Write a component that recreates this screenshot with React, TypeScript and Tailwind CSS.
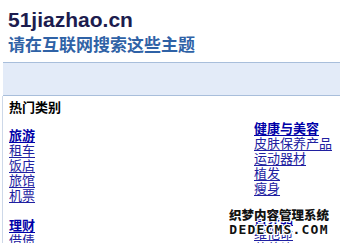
const cjk = "font-['SimSun','Noto_Sans_CJK_SC',sans-serif]"

const left = [
  { title: "旅游", items: ["租车", "饭店", "旅馆", "机票"] },
  { title: "理财", items: ["借债", "信用卡"] },
]

const right = [
  { title: "健康与美容", items: ["皮肤保养产品", "运动器材", "植发", "瘦身"] },
  { title: "营养品", items: ["维他命", "营养补品"] },
]

function Group({ title, items }: { title: string; items: string[] }) {
  return (
    <div className="flex flex-col items-start mb-[15px]">
      <a href="#" className="font-bold text-[#0000a8] underline underline-offset-2">
        {title}
      </a>
      {items.map((item) => (
        <a key={item} href="#" className="text-[#2020a0] underline underline-offset-2">
          {item}
        </a>
      ))}
    </div>
  )
}

export default function App() {
  return (
    <div className="relative w-[340px] h-[243px] overflow-hidden bg-white">
      <div className="pl-[8px] pt-[8px]">
        <h1 className="font-['Liberation_Sans',Arial,sans-serif] text-[21px] leading-[24px] font-bold text-[#1c1c4e]">
          51jiazhao.cn
        </h1>
        <p className={`${cjk} mt-[2px] text-[17px] leading-[20px] font-bold text-[#2f62a6]`}>
          请在互联网搜索这些主题
        </p>
      </div>

      <div className="mt-[8px] ml-[3px] h-[34px] border-y border-[#a8bedb] bg-[#e3ebf8]" />

      <div className={`${cjk} ml-[2px] border-l border-[#cdd8e8] pl-[6px] pt-[3px] text-[13px] leading-[15px]`}>
        <div className="font-bold text-black">热门类别</div>
        <div className="flex">
          <div className="w-[245px] pt-[13px]">
            {left.map((g) => (
              <Group key={g.title} {...g} />
            ))}
          </div>
          <div className="pt-[6px]">
            {right.map((g) => (
              <Group key={g.title} {...g} />
            ))}
          </div>
        </div>
      </div>

      {/* watermark over the screenshot */}
      <div className="absolute left-[229px] top-[207px] flex flex-col items-center whitespace-nowrap text-[#111] [text-shadow:1px_0_0_#fff,-1px_0_0_#fff,0_1px_0_#fff,0_-1px_0_#fff,1px_1px_0_#fff,-1px_-1px_0_#fff,1px_-1px_0_#fff,-1px_1px_0_#fff]">
        <span className={`${cjk} text-[12.5px] leading-[16px] font-black`}>织梦内容管理系统</span>
        <span className="font-['DejaVu_Sans_Mono',monospace] text-[13px] leading-[13px] font-bold tracking-[1.2px]">
          DEDECMS.COM
        </span>
      </div>
    </div>
  )
}
